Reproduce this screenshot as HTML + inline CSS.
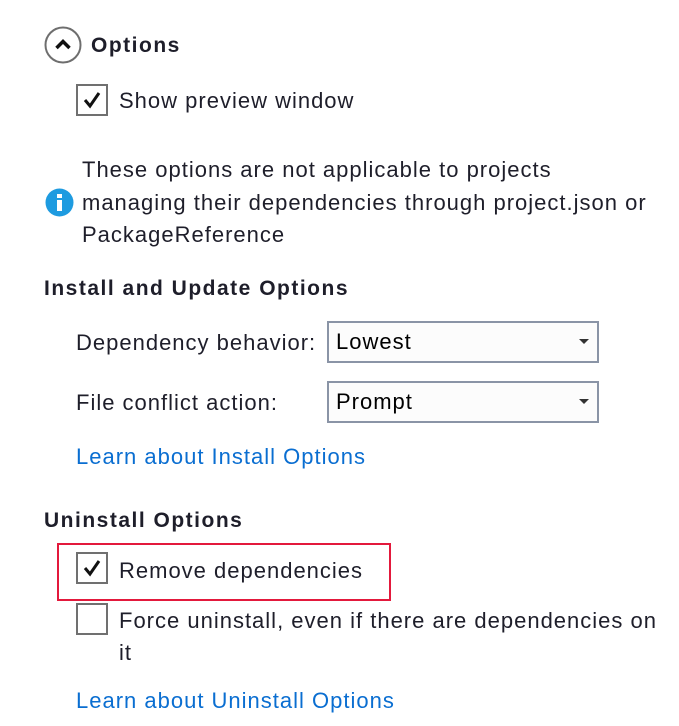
<!DOCTYPE html>
<html><head><meta charset="utf-8"><style>
body{margin:0;width:679px;height:726px;background:#fff;position:relative;font-family:"Liberation Sans",sans-serif;font-size:22px;color:#1e1e2a;overflow:hidden;letter-spacing:1px}
.a{position:absolute;white-space:nowrap;line-height:30px}
.b{font-weight:bold;font-size:21px;letter-spacing:1.5px}
.cb{position:absolute;width:28px;height:28px;border:2px solid #707070;background:#fff}
.cb svg{position:absolute;left:4px;top:4px}
.combo{position:absolute;left:327px;width:268px;height:38px;border:2px solid #8a94a6;background:#fcfcfc}
.combo span{position:absolute;left:7px;top:4px;line-height:30px;color:#000}
.combo i{position:absolute;right:8px;top:16px;width:0;height:0;border-left:5px solid transparent;border-right:5px solid transparent;border-top:5px solid #333}
.lnk{color:#0a6ed1}
</style></head><body>
<svg style="position:absolute;left:44px;top:26px" width="38" height="38"><circle cx="19" cy="19" r="17.5" fill="none" stroke="#6e6e6e" stroke-width="2"/><path d="M12.5 22 L19 15.5 L25.5 22" fill="none" stroke="#111" stroke-width="3.5"/></svg>
<div class="a b" style="left:91px;top:31px">Options</div>
<div class="cb" style="left:76px;top:84px"><svg width="20" height="20"><path d="M3 10 L8 16 L17 3" fill="none" stroke="#111" stroke-width="3"/></svg></div>
<div class="a" style="left:119px;top:86px">Show preview window</div>
<svg style="position:absolute;left:45px;top:188px" width="29" height="29"><circle cx="14.5" cy="14.5" r="14" fill="#1e9be0"/><rect x="12" y="12" width="5" height="11" fill="#fff"/><rect x="12" y="6" width="5" height="4" fill="#fff"/></svg>
<div class="a" style="left:82px;top:155px">These options are not applicable to projects</div>
<div class="a" style="left:82px;top:188px">managing their dependencies through project.json or</div>
<div class="a" style="left:82px;top:220px">PackageReference</div>
<div class="a b" style="left:44px;top:274px">Install and Update Options</div>
<div class="a" style="left:76px;top:328px">Dependency behavior:</div>
<div class="combo" style="top:321px"><span>Lowest</span><i></i></div>
<div class="a" style="left:76px;top:388px">File conflict action:</div>
<div class="combo" style="top:381px"><span>Prompt</span><i></i></div>
<div class="a lnk" style="left:76px;top:442px">Learn about Install Options</div>
<div class="a b" style="left:44px;top:506px">Uninstall Options</div>
<div style="position:absolute;left:57px;top:543px;width:330px;height:54px;border:2px solid #e3193c"></div>
<div class="cb" style="left:76px;top:552px"><svg width="20" height="20"><path d="M3 10 L8 16 L17 3" fill="none" stroke="#111" stroke-width="3"/></svg></div>
<div class="a" style="left:119px;top:556px">Remove dependencies</div>
<div class="cb" style="left:76px;top:603px"></div>
<div class="a" style="left:119px;top:606px">Force uninstall, even if there are dependencies on</div>
<div class="a" style="left:119px;top:638px">it</div>
<div class="a lnk" style="left:76px;top:686px">Learn about Uninstall Options</div>
</body></html>
